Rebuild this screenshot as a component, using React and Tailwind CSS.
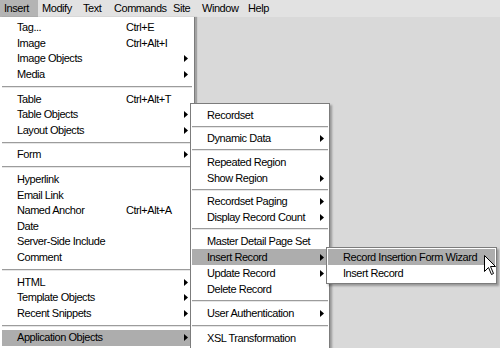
import React from "react";

function Arrow() {
  return (
    <svg width="4" height="7" viewBox="0 0 4 7" className="shrink-0">
      <path d="M0 0 L4 3.5 L0 7 Z" fill="#000" />
    </svg>
  );
}

function Sep() {
  return (
    <div className="flex flex-col justify-center h-[9px]">
      <div className="h-px bg-[#9c9c9c]" />
      <div className="h-px bg-[#e6e6e6]" />
    </div>
  );
}

function MainItem({ label, shortcut, arrow, hl }) {
  return (
    <div
      className={
        hl
          ? "flex items-center h-[15.6px] pl-[15px] pr-[4px] bg-[#adadad]"
          : "flex items-center h-[15.6px] pl-[15px] pr-[4px]"
      }
    >
      <span className="w-[109px] shrink-0 whitespace-nowrap">{label}</span>
      {shortcut && <span className="whitespace-nowrap">{shortcut}</span>}
      {arrow && (
        <span className="ml-auto">
          <Arrow />
        </span>
      )}
    </div>
  );
}

function SubItem({ label, arrow, hl }) {
  return (
    <div
      className={
        hl
          ? "flex items-center h-4 pl-[15px] pr-[4px] bg-[#adadad]"
          : "flex items-center h-4 pl-[15px] pr-[4px]"
      }
    >
      <span className="whitespace-nowrap">{label}</span>
      {arrow && (
        <span className="ml-auto">
          <Arrow />
        </span>
      )}
    </div>
  );
}

function SubSep({ tall }) {
  return (
    <div
      className={
        tall
          ? "flex flex-col justify-center h-[8.5px]"
          : "flex flex-col justify-center h-[7.5px]"
      }
    >
      <div className="h-px bg-[#9c9c9c]" />
      <div className="h-px bg-[#e6e6e6]" />
    </div>
  );
}

export default function App() {
  const bar = [
    ["Insert", "w-[38px] bg-[#b4b4b4]"],
    ["Modify", "w-[41px]"],
    ["Text", "w-[31px]"],
    ["Commands", "w-[59px]"],
    ["Site", "w-[29px]"],
    ["Window", "w-[46px]"],
    ["Help", "w-[40px]"],
  ];
  return (
    <div
      className="relative w-[500px] h-[348px] overflow-hidden bg-[#d9d9d9] text-[11px] tracking-[-0.45px] text-black leading-none"
      style={{ fontFamily: '"Liberation Sans", Arial, sans-serif' }}
    >
      <div className="flex h-[17px] bg-[#e2e2e2]">
        {bar.map(([t, c]) => (
          <div key={t} className={"flex items-center pl-[4px] h-full " + c}>
            {t}
          </div>
        ))}
      </div>

      {/* main menu */}
      <div className="absolute left-0 top-[17px] w-[195px] h-[340px] bg-white border-r border-[#7c7c7c] px-[2px] pt-[3px] shadow-[2px_0_1px_rgba(0,0,0,0.25)]">
        <MainItem label="Tag..." shortcut="Ctrl+E" />
        <MainItem label="Image" shortcut="Ctrl+Alt+I" />
        <MainItem label="Image Objects" arrow />
        <MainItem label="Media" arrow />
        <Sep />
        <MainItem label="Table" shortcut="Ctrl+Alt+T" />
        <MainItem label="Table Objects" arrow />
        <MainItem label="Layout Objects" arrow />
        <Sep />
        <MainItem label="Form" arrow />
        <Sep />
        <MainItem label="Hyperlink" />
        <MainItem label="Email Link" />
        <MainItem label="Named Anchor" shortcut="Ctrl+Alt+A" />
        <MainItem label="Date" />
        <MainItem label="Server-Side Include" />
        <MainItem label="Comment" />
        <Sep />
        <MainItem label="HTML" arrow />
        <MainItem label="Template Objects" arrow />
        <MainItem label="Recent Snippets" arrow />
        <Sep />
        <MainItem label="Application Objects" arrow hl />
      </div>

      {/* submenu 1 */}
      <div className="absolute left-[190px] top-[103px] w-[140px] bg-white border border-[#7c7c7c] px-px pt-[3px] pb-[2px] shadow-[2px_2px_2px_rgba(0,0,0,0.3)]">
        <SubItem label="Recordset" />
        <SubSep />
        <SubItem label="Dynamic Data" arrow />
        <SubSep />
        <SubItem label="Repeated Region" />
        <SubItem label="Show Region" arrow />
        <SubSep />
        <SubItem label="Recordset Paging" arrow />
        <SubItem label="Display Record Count" arrow />
        <SubSep />
        <SubItem label="Master Detail Page Set" />
        <SubItem label="Insert Record" arrow hl />
        <SubItem label="Update Record" arrow />
        <SubItem label="Delete Record" />
        <SubSep tall />
        <SubItem label="User Authentication" arrow />
        <SubSep tall />
        <SubItem label="XSL Transformation" />
      </div>

      {/* submenu 2 */}
      <div className="absolute left-[326px] top-[247px] w-[171px] bg-white border border-[#7c7c7c] p-px pb-[2px] shadow-[2px_2px_2px_rgba(0,0,0,0.3)]">
        <SubItem label="Record Insertion Form Wizard" hl />
        <SubItem label="Insert Record" />
      </div>

      {/* cursor */}
      <svg
        className="absolute left-[484px] top-[255px]"
        width="13"
        height="21"
        viewBox="0 0 13 21"
      >
        <path
          d="M0.5 0.5 L0.5 16.5 L4.5 12.5 L7.5 19.5 L9.5 18.5 L6.5 11.5 L11.5 11.5 Z"
          fill="#fff"
          stroke="#000"
          strokeWidth="1"
          strokeLinejoin="miter"
        />
      </svg>
    </div>
  );
}
